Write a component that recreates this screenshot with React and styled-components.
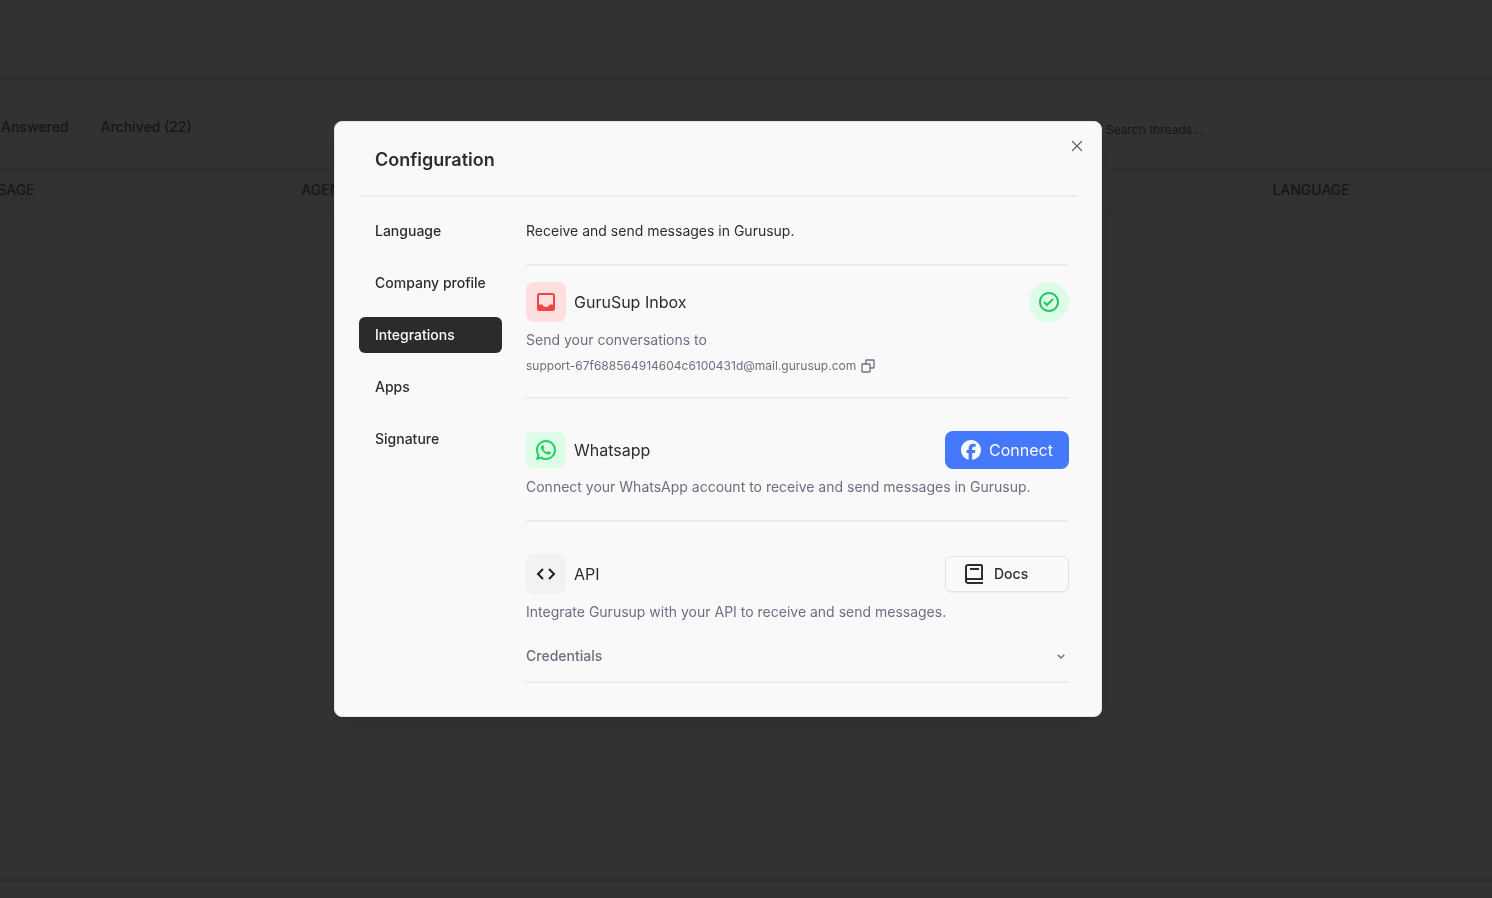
import React from 'react';
import styled, { createGlobalStyle } from 'styled-components'
import { BiBook, BiCheckCircle, BiChevronDown, BiCode, BiCopy } from 'react-icons/bi'
import { FaFacebook } from 'react-icons/fa6'
import { RiWhatsappLine } from 'react-icons/ri'
import { X } from 'lucide-react'

const sections = ['Language', 'Company profile', 'Integrations', 'Apps', 'Signature']

function InboxIcon() {
    return (
        <svg width="24" height="24" viewBox="0 0 24 24" fill="currentColor" fillRule="evenodd">
            <path d="M5.5 3h13A2.5 2.5 0 0 1 21 5.5v13a2.5 2.5 0 0 1-2.5 2.5h-13A2.5 2.5 0 0 1 3 18.5v-13A2.5 2.5 0 0 1 5.5 3zM5.8 5a.8.8 0 0 0-.8.8V14.500h3.300c.5 1.600 1.900 2.500 3.700 2.500s3.200-.9 3.700-2.500H19V5.800a.8.8 0 0 0-.8-.8z" />
        </svg>
    );
}

function Threads() {
    return (
        <Page>
            <TopBar />
            <Main>
                <Toolbar>
                    <Filters>
                        <Filter>Answered</Filter>
                        <Filter>Archived (22)</Filter>
                    </Filters>
                    <Search type="text" placeholder="Search threads..." aria-label="Search threads" />
                </Toolbar>
                <Table>
                    <thead>
                        <tr>
                            <HeadCell $width="21%">MESSAGE</HeadCell>
                            <HeadCell $width="61%">AGENT</HeadCell>
                            <HeadCell>LANGUAGE</HeadCell>
                        </tr>
                    </thead>
                </Table>
            </Main>
            <BottomBar />
        </Page>
    );
}

function App() {
    return (
        <>
            <GlobalStyle />
            <Threads />
            <Overlay>
                <Modal role="dialog" aria-modal="true" aria-labelledby="dialog-title">
                    <Close aria-label="Close"><X size={18} strokeWidth={1.75} /></Close>
                    <Header>
                        <Title id="dialog-title">Configuration</Title>
                    </Header>
                    <Body>
                        <Nav>
                            {
                                sections.map(name => (
                                    <NavItem key={name} $active={name === 'Integrations'}>{name}</NavItem>
                                ))
                            }
                        </Nav>
                        <Content>
                            <Intro>Receive and send messages in Gurusup.</Intro>
                            <Section $top={16} $bottom={23}>
                                <Row>
                                    <IconBox $bg="#ffdfdf" $color="#ef4444"><InboxIcon /></IconBox>
                                    <Name>GuruSup Inbox</Name>
                                    <Status><BiCheckCircle size={24} /></Status>
                                </Row>
                                <Text>Send your conversations to</Text>
                                <Email>
                                    support-67f688564914604c6100431d@mail.gurusup.com
                                    <CopyButton aria-label="Copy address"><BiCopy size={16} /></CopyButton>
                                </Email>
                            </Section>
                            <Section $top={32} $bottom={23}>
                                <Row>
                                    <IconBox $short $bg="#dcfce7" $color="#22d15f"><RiWhatsappLine size={24} /></IconBox>
                                    <Name>Whatsapp</Name>
                                    <ConnectButton><FaFacebook size={20} />Connect</ConnectButton>
                                </Row>
                                <Text>Connect your WhatsApp account to receive and send messages in Gurusup.</Text>
                            </Section>
                            <Section $top={32} $bottom={15}>
                                <Row>
                                    <IconBox $bg="#f3f2f1" $color="#1f1f1f"><BiCode size={24} /></IconBox>
                                    <Name>API</Name>
                                    <DocsButton><BiBook size={24} />Docs</DocsButton>
                                </Row>
                                <Text>Integrate Gurusup with your API to receive and send messages.</Text>
                                <Credentials aria-expanded="false">
                                    Credentials
                                    <BiChevronDown size={16} />
                                </Credentials>
                            </Section>
                        </Content>
                    </Body>
                </Modal>
            </Overlay>
        </>
    );
}

export default App;

const GlobalStyle = createGlobalStyle`
    * {
        box-sizing: border-box;
    }
    body {
        margin: 0;
        font-family: Inter, "Liberation Sans", sans-serif;
        font-size: 14px;
        line-height: 20px;
        color: #2b2d35;
    }
    button, input {
        font: inherit;
        color: inherit;
    }
    button {
        border: 0;
        padding: 0;
        background: none;
        cursor: pointer;
    }
    svg {
        flex-shrink: 0;
    }
`
const Page = styled.div`
    min-height: 100vh;
    display: flex;
    flex-direction: column;
    overflow: hidden;
    background-color: #f5f5e8;
    color: #6b7280;
`
const TopBar = styled.header`
    height: 79px;
`
const BottomBar = styled.footer`
    height: 16px;
`
const Main = styled.main`
    flex: 1;
    margin: 0 -50px;
    background-color: #fafafa;
    border-top: 1px solid #e1e1e1;
    border-bottom: 3px solid #e1e1e1;
`
const Toolbar = styled.div`
    display: flex;
    align-items: center;
    justify-content: space-between;
    padding: 28px 16px 20px 51px;
`
const Filters = styled.div`
    display: flex;
    gap: 32px;
    padding-bottom: 2px;
`
const Filter = styled.button`
    font-weight: 500;
`
const Search = styled.input`
    width: 433px;
    height: 40px;
    padding: 2px 12px 0;
    border: 1px solid #dcdcdc;
    border-radius: 6px;
    background: none;
    font-size: 12px;
    &::placeholder {
        color: #6b7280;
    }
`
const Table = styled.table`
    width: 100%;
    border-collapse: collapse;
    background-color: #f3f3f3;
    border-top: 1px solid #dcdcdc;
    border-bottom: 1px solid #dcdcdc;
`
const HeadCell = styled.th`
    width: ${props => props.$width || 'auto'};
    height: 43px;
    padding: 0 17px;
    font-weight: 500;
    text-align: left;
`
const Overlay = styled.div`
    position: fixed;
    inset: 0;
    z-index: 10;
    display: flex;
    align-items: center;
    justify-content: center;
    padding: 0 56px 60px 0;
    background-color: rgba(0, 0, 0, 0.8);
`
const Modal = styled.div`
    position: relative;
    width: 100%;
    max-width: 768px;
    padding: 24px 24px 33px;
    background-color: #f9f9f9;
    border: 1px solid #e5e5e5;
    border-radius: 8px;
    box-shadow: 0 10px 15px -3px rgba(0, 0, 0, 0.1);
`
const Close = styled.button`
    position: absolute;
    top: 15px;
    right: 15px;
    display: flex;
    color: #63656c;
`
const Header = styled.div`
    padding: 0 16px 21px;
    border-bottom: 2px solid #ececec;
`
const Title = styled.h2`
    margin: 0;
    font-size: 18px;
    line-height: 28px;
    font-weight: 600;
`
const Body = styled.div`
    display: flex;
    gap: 24px;
    padding: 16px 8px 0 0;
`
const Nav = styled.nav`
    width: 143px;
    flex-shrink: 0;
    display: flex;
    flex-direction: column;
    gap: 16px;
`
const NavItem = styled.button`
    height: 36px;
    padding: 0 16px;
    border-radius: 6px;
    font-weight: 500;
    text-align: left;
    white-space: nowrap;
    background-color: ${props => props.$active ? '#2b2b2b' : 'transparent'};
    color: ${props => props.$active ? '#fafafa' : 'inherit'};
`
const Content = styled.div`
    flex: 1;
    min-width: 0;
`
const Intro = styled.p`
    margin: 0;
    padding: 8px 0 23px;
    border-bottom: 2px solid #ececec;
`
const Section = styled.section`
    padding: ${props => props.$top}px 0 ${props => props.$bottom}px;
    border-bottom: 2px solid #ececec;
`
const Row = styled.div`
    display: flex;
    align-items: center;
    gap: 8px;
`
const IconBox = styled.div`
    width: 40px;
    height: ${props => props.$short ? 36 : 40}px;
    display: flex;
    align-items: center;
    justify-content: center;
    border-radius: 8px;
    background-color: ${props => props.$bg};
    color: ${props => props.$color};
`
const Name = styled.h3`
    flex: 1;
    margin: 0;
    font-size: 16px;
    line-height: 24px;
    font-weight: 400;
`
const Status = styled.div`
    width: 40px;
    height: 40px;
    display: flex;
    align-items: center;
    justify-content: center;
    border-radius: 50%;
    background-color: #dcfce7;
    color: #22c55e;
`
const Text = styled.p`
    margin: 8px 0 0;
    color: #6b7080;
`
const Email = styled.div`
    display: flex;
    align-items: center;
    gap: 4px;
    margin-top: 8px;
    font-size: 12px;
    line-height: 16px;
    color: #6b7080;
`
const CopyButton = styled.button`
    display: flex;
`
const ConnectButton = styled.button`
    width: 124px;
    height: 38px;
    display: flex;
    align-items: center;
    justify-content: center;
    gap: 8px;
    border-radius: 8px;
    background-color: #4379fa;
    color: #fafafa;
    font-size: 16px;
`
const DocsButton = styled.button`
    width: 124px;
    height: 36px;
    display: flex;
    align-items: center;
    gap: 8px;
    padding: 0 16px;
    border: 1px solid #e2e2e0;
    border-radius: 6px;
    box-shadow: 0 1px 2px rgba(0, 0, 0, 0.05);
    font-weight: 500;
`
const Credentials = styled.button`
    width: 100%;
    display: flex;
    align-items: center;
    justify-content: space-between;
    margin-top: 24px;
    font-weight: 500;
    color: #6b7080;
`
